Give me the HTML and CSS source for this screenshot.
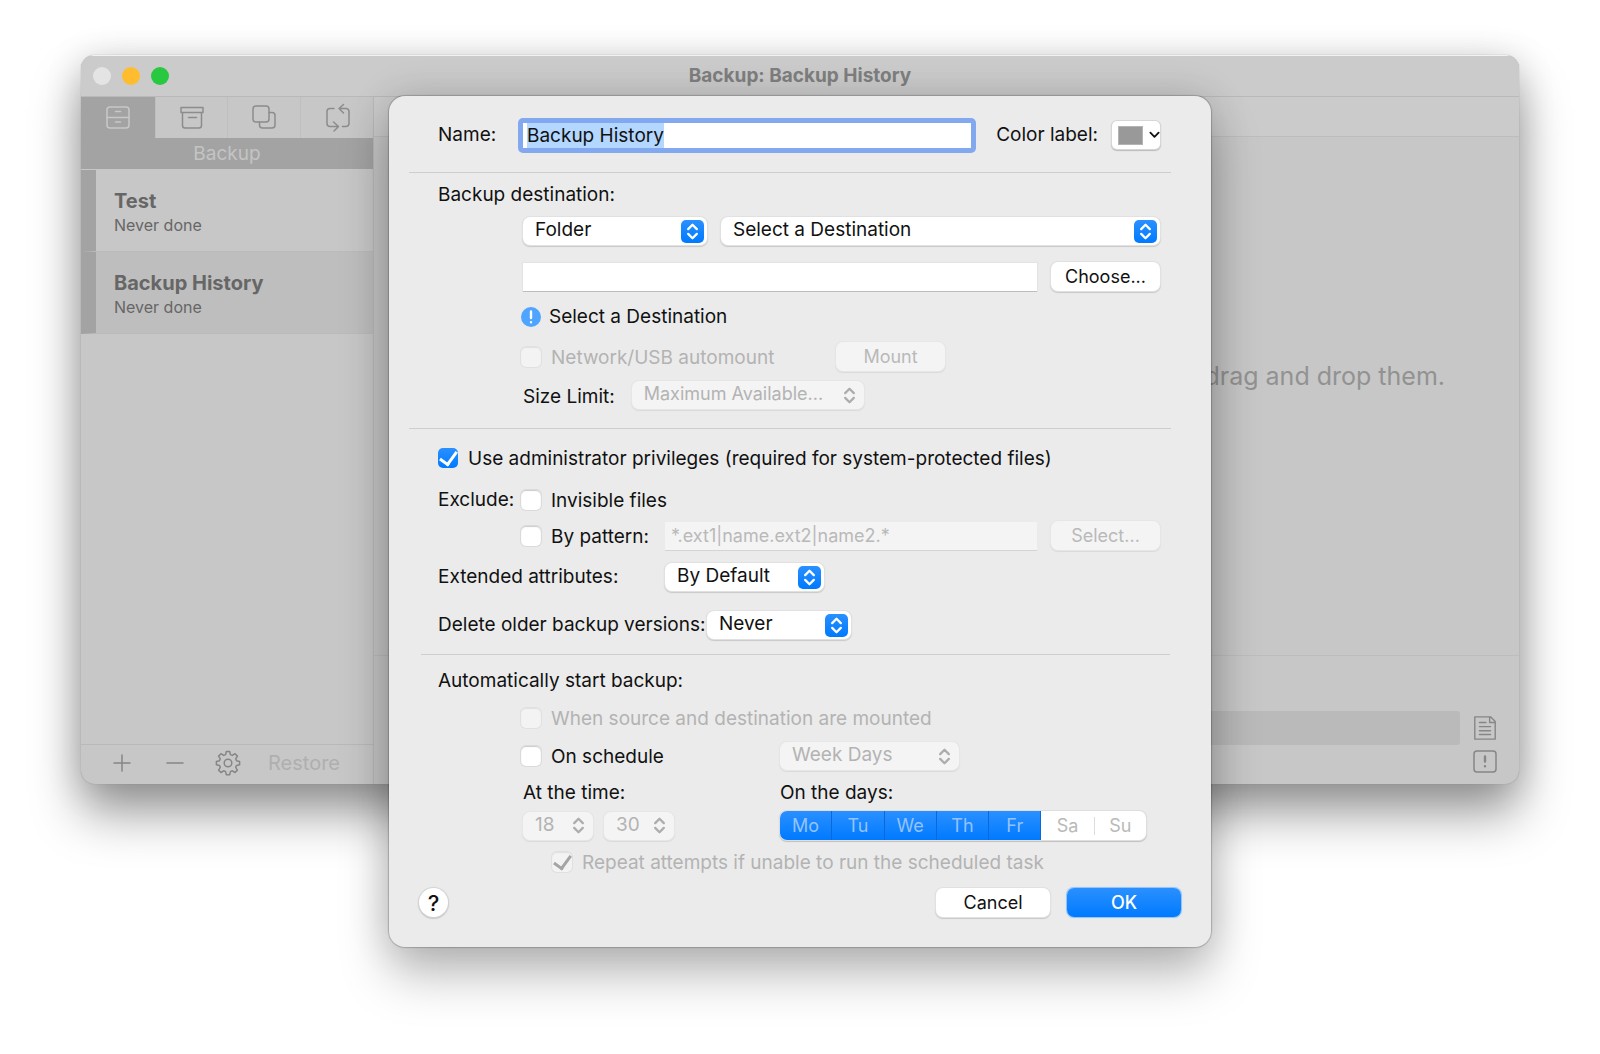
FILE: index.html
```html
<!DOCTYPE html>
<html lang="en">
<head>
<meta charset="utf-8">
<title>Backup: Backup History</title>
<link rel="stylesheet" href="styles.css">
</head>
<body>
<svg class="defs" aria-hidden="true">
  <symbol id="updown" viewBox="0 0 24 24"><path d="M7.5 9.5 12 5l4.500 4.500M7.500 14.500 12 19l4.500-4.500" fill="none" stroke="currentColor" stroke-width="2.400" stroke-linecap="round" stroke-linejoin="round"/></symbol>
</svg>
<main class="stage">
  <div class="window">
    <header class="titlebar">
      <div class="lights"><button class="light" aria-label="Close"></button><button class="light light-min" aria-label="Minimize"></button><button class="light light-max" aria-label="Zoom"></button></div>
      <h1 class="title">Backup: Backup History</h1>
    </header>
    <div class="panes">
      <aside class="sidebar">
        <nav class="tabs">
          <button class="tab tab-on" aria-label="Backup"><svg class="icon" viewBox="0 0 26 26"><rect x="2" y="2" width="22" height="21" rx="3"/><path d="M2 12.500h22M10.500 6.500h5M10.500 17h5"/></svg></button>
          <button class="tab" aria-label="Archive"><svg class="icon" viewBox="0 0 26 26"><path d="M2 2.500h22v5H2zM3.500 7.500v13a2.500 2.500 0 0 0 2.500 2.500h14a2.500 2.500 0 0 0 2.500-2.500v-13M9.500 12.500h8"/></svg></button>
          <button class="tab" aria-label="Clone"><svg class="icon" viewBox="0 0 26 26"><rect x="2" y="1" width="16" height="16" rx="3"/><path d="M18 7.500h3a3 3 0 0 1 3 3V20a3 3 0 0 1-3 3h-9.500a3 3 0 0 1-3-3v-3"/></svg></button>
          <button class="tab" aria-label="Synchronize"><svg class="icon" viewBox="0 0 26 26"><path d="M10 3.500H6a3 3 0 0 0-3 3v12a3 3 0 0 0 3 3h8M9.500 17l5 4.500-4.500 4.500M18.500 21.500H22a3 3 0 0 0 3-3v-12a3 3 0 0 0-3-3h-7M19.500-.5l-4.500 4 4.500 4.500"/></svg></button>
        </nav>
        <h2 class="band">Backup</h2>
        <ul class="tasks">
          <li class="task"><strong class="task-name">Test</strong><span class="task-state">Never done</span></li>
          <li class="task task-on"><strong class="task-name">Backup History</strong><span class="task-state">Never done</span></li>
        </ul>
        <footer class="sidebar-foot">
          <button class="tool" aria-label="Add"><svg class="icon" viewBox="0 0 26 26"><path d="M13 5v16M5 13h16"/></svg></button>
          <button class="tool" aria-label="Remove"><svg class="icon" viewBox="0 0 26 26"><path d="M5 13h16"/></svg></button>
          <button class="tool" aria-label="Settings"><svg class="icon" viewBox="0 0 26 26"><circle cx="13" cy="13" r="3.800"/><path d="M11.300 1.500h3.400l.7 3.100 1.900.8 2.700-1.700 2.400 2.400-1.700 2.700.8 1.900 3.100.7v3.400l-3.100.7-.8 1.900 1.700 2.700-2.400 2.400-2.700-1.700-1.900.8-.7 3.100h-3.400l-.7-3.100-1.900-.8L6 22.500l-2.400-2.400 1.700-2.700-.8-1.900-3.100-.7v-3.400l3.100-.7.8-1.900L3.600 6.100 6 3.700l2.700 1.700 1.900-.8z"/></svg></button>
          <button class="restore" disabled>Restore</button>
        </footer>
      </aside>
      <section class="content">
        <div class="content-bar"></div>
        <p class="drop">drag and drop them.</p>
        <div class="status">
          <div class="progress"></div>
          <div class="status-tools">
            <button class="tool" aria-label="Log"><svg class="icon" viewBox="0 0 26 28"><path d="M2 2h17l5 5v19H2zM18 2v6h6M7 8h7M7 12.500h12M7 17h12M7 21h12"/></svg></button>
            <button class="tool" aria-label="Alerts"><svg class="icon" viewBox="0 0 26 26"><rect x="2" y="2" width="22" height="21" rx="3"/><path stroke-width="2.400" d="M13 7.500v5M13 17.200v.1"/></svg></button>
          </div>
        </div>
      </section>
    </div>
  </div>

  <form class="dialog" role="dialog" aria-label="Backup settings">
    <div class="row name-row">
      <label class="name-label" for="name">Name:</label>
      <div class="field-focus"><input class="name-input" id="name" type="text" value="Backup History"></div>
      <label class="color-label" for="color">Color label:</label>
      <button class="color" id="color" type="button"><span class="swatch"></span><svg class="chevron" viewBox="0 0 12 8"><path d="M1.500 1.500 6 6l4.500-4.500"/></svg></button>
    </div>
    <hr class="rule">

    <section class="group group-dest">
      <h2 class="heading">Backup destination:</h2>
      <div class="row indent gap-m">
        <span class="popup popup-kind"><select aria-label="Kind"><option>Folder</option></select><svg class="knob"><use href="#updown"/></svg></span>
        <span class="popup grow"><select aria-label="Destination"><option>Select a Destination</option></select><svg class="knob"><use href="#updown"/></svg></span>
      </div>
      <div class="row indent gap-m path-row">
        <input class="text grow" type="text" aria-label="Path">
        <button class="btn" type="button">Choose...</button>
      </div>
      <div class="row checks note"><svg class="alert" viewBox="0 0 20 20"><circle cx="10" cy="10" r="10"/><path d="M10 4.500v6.500M10 15.200v.1"/></svg><span>Select a Destination</span></div>
      <div class="row checks mount-row">
        <label class="check check-off"><input type="checkbox" disabled><span>Network/USB automount</span></label>
        <button class="btn" type="button" disabled>Mount</button>
      </div>
      <div class="row indent gap-l limit-row">
        <label for="limit">Size Limit:</label>
        <span class="popup popup-limit popup-off"><select id="limit" disabled><option>Maximum Available...</option></select><svg class="knob"><use href="#updown"/></svg></span>
      </div>
    </section>
    <hr class="rule">

    <section class="group group-options">
      <label class="check"><input type="checkbox" checked><span>Use administrator privileges (required for system-protected files)</span></label>
      <div class="row exclude-row">
        <span class="exclude-label">Exclude:</span>
        <label class="check"><input type="checkbox"><span>Invisible files</span></label>
      </div>
      <div class="row checks pattern-row">
        <label class="check pattern-check"><input type="checkbox"><span>By pattern:</span></label>
        <input class="text grow" type="text" aria-label="Pattern" placeholder="*.ext1|name.ext2|name2.*" disabled>
        <button class="btn pattern-btn" type="button" disabled>Select...</button>
      </div>
      <div class="row attr-row">
        <label class="attr-label" for="attrs">Extended attributes:</label>
        <span class="popup popup-attrs"><select id="attrs"><option>By Default</option></select><svg class="knob"><use href="#updown"/></svg></span>
      </div>
      <div class="row delete-row">
        <label class="delete-label" for="older">Delete older backup versions:</label>
        <span class="popup popup-older"><select id="older"><option>Never</option></select><svg class="knob"><use href="#updown"/></svg></span>
      </div>
    </section>
    <hr class="rule rule-short">

    <section class="group group-auto">
      <h2 class="heading">Automatically start backup:</h2>
      <div class="row checks when-row"><label class="check check-off"><input type="checkbox" disabled><span>When source and destination are mounted</span></label></div>
      <div class="row checks schedule-row">
        <label class="check half-check"><input type="checkbox"><span>On schedule</span></label>
        <span class="popup popup-week popup-off"><select aria-label="Schedule" disabled><option>Week Days</option></select><svg class="knob"><use href="#updown"/></svg></span>
      </div>
      <div class="row indent caption-row"><span class="half">At the time:</span><span>On the days:</span></div>
      <div class="row indent time-row">
        <div class="half times">
          <span class="popup popup-num popup-off"><select aria-label="Hour" disabled><option>18</option></select><svg class="knob"><use href="#updown"/></svg></span>
          <span class="popup popup-num popup-off"><select aria-label="Minute" disabled><option>30</option></select><svg class="knob"><use href="#updown"/></svg></span>
        </div>
        <div class="days">
          <button class="day day-on" type="button" disabled>Mo</button><button class="day day-on" type="button" disabled>Tu</button><button class="day day-on" type="button" disabled>We</button><button class="day day-on" type="button" disabled>Th</button><button class="day day-on" type="button" disabled>Fr</button><button class="day" type="button" disabled>Sa</button><button class="day day-last" type="button" disabled>Su</button>
        </div>
      </div>
      <div class="row repeat-row"><label class="check check-off"><input type="checkbox" checked disabled><span>Repeat attempts if unable to run the scheduled task</span></label></div>
    </section>

    <footer class="row actions">
      <button class="help" type="button" aria-label="Help">?</button>
      <button class="btn btn-wide" type="button">Cancel</button>
      <button class="btn btn-wide btn-primary" type="submit">OK</button>
    </footer>
  </form>
</main>
</body>
</html>
```
FILE: styles.css
```css
* { box-sizing: border-box; }
body {
  margin: 0;
  background: #fff;
  color: #111;
  font: 19px/24px Inter, "Liberation Sans", sans-serif;
}
h1, h2, p, ul { margin: 0; padding: 0; font: inherit; list-style: none; }
button, input, select { font: inherit; color: inherit; margin: 0; padding: 0; border: 0; }
button { background: none; }
.defs { display: none; }

/* The sheet hangs over the window: both share one grid cell. */
.stage { display: grid; padding: 55px 81px 107px; }
.window, .dialog { grid-area: 1 / 1; align-self: start; }

.window {
  display: flex;
  flex-direction: column;
  min-height: 729px;
  border-radius: 14px;
  overflow: hidden;
  background: #c7c7c7;
  box-shadow: 0 0 1px #888, 0 30px 50px rgba(0, 0, 0, .38), 0 4px 36px rgba(0, 0, 0, .16);
}
.titlebar {
  display: grid;
  grid-template-columns: 1fr auto 1fr;
  align-items: center;
  height: 42px;
  padding: 0 12px;
  background: #cbcbcb;
  border-top: 1px solid #f2f2f2;
  border-bottom: 1px solid #b9b9b9;
}
.lights { display: flex; gap: 11px; }
.light { width: 18px; height: 18px; border-radius: 50%; background: #e4e4e4; }
.light-min { background: #febc2e; }
.light-max { background: #28c840; }
.title { font-weight: 700; color: #7f7f7f; }
.panes { display: flex; flex: 1; }
.sidebar { display: flex; flex-direction: column; width: 293px; border-right: 1px solid #b9b9b9; }
.tabs { display: grid; grid-template-columns: 75px repeat(3, 1fr); height: 41px; }
.tab { display: grid; place-items: center; border-right: 1px solid #bfbfbf; color: #8c8c8c; }
.tab:last-child { border: 0; }
.tab-on { background: #a3a3a3; color: #c8c8c8; }
.icon { display: block; width: 26px; height: 26px; overflow: visible; fill: none; stroke: currentColor; stroke-width: 1.5; stroke-linecap: round; stroke-linejoin: round; }
.band { height: 31px; line-height: 31px; text-align: center; color: #c4c4c4; background: #a3a3a3; }
.tasks { flex: 1; padding-top: 1px; }
.task {
  display: flex;
  flex-direction: column;
  height: 82px;
  padding: 19px 0 0 18px;
  border-left: 15px solid #a3a3a3;
  border-bottom: 1px solid #bbb;
  color: #666;
}
.task-on { background: #bebebe; }
.task-name { font-size: 20px; }
.task-state { font-size: 16px; }
.sidebar-foot { display: flex; align-items: center; height: 40px; padding: 0 0 4px 28px; gap: 27px; border-top: 1px solid #b9b9b9; }
.tool { color: #868686; }
.restore { font-size: 20px; color: #afafaf; }
.content { display: flex; flex: 1; flex-direction: column; }
.content-bar { height: 40px; background: #cbcbcb; border-bottom: 1px solid #bdbdbd; }
.drop { display: flex; flex: 1; align-items: center; justify-content: flex-end; padding: 0 74px 40px 0; font-size: 25px; color: #929292; }
.status { display: flex; gap: 12px; height: 129px; padding: 55px 21px 0 24px; border-top: 1px solid #bdbdbd; }
.progress { flex: 1; height: 34px; border-radius: 3px; background: #bababa; }
.status-tools { display: flex; flex-direction: column; gap: 8px; padding-top: 4px; }

.dialog {
  display: flex;
  flex-direction: column;
  justify-self: center;
  width: 822px;
  max-width: 100%;
  margin-top: 41px;
  padding: 0 20px 30px;
  border-radius: 16px;
  background: #ebebeb;
  box-shadow: 0 0 1px 1px rgba(0, 0, 0, .2), 0 28px 50px rgba(0, 0, 0, .26), 0 0 40px rgba(0, 0, 0, .14);
}
.row { display: flex; align-items: center; }
.grow { flex: 1; min-width: 0; }
.rule { width: 762px; max-width: 100%; height: 1px; margin: 0; border: 0; background: #cecece; }
.rule-short { width: 749px; margin-left: 12px; }
.name-row { height: 76px; padding: 2px 31px 0 29px; }
.name-label { width: 80px; }
.field-focus { flex: 1; border-radius: 5px; background: #82a8f0; padding: 5px; }
.name-input { display: block; width: 100%; height: 25px; padding: 0 4px; background: linear-gradient(#b3d7ff, #b3d7ff) 4px 0 / 137px 25px no-repeat #fff; outline: none; }
.color-label { margin: 0 14px 0 20px; }
.color { display: flex; align-items: center; gap: 6px; width: 48px; height: 28px; padding-left: 6px; border-radius: 5px; background: #fff; box-shadow: 0 0 0 1px #d6d6d6, 0 1px 1px 1px #bbb; }
.swatch { width: 25px; height: 19px; background: #999; border: 1px solid #b4b4b4; }
.chevron { width: 11px; height: 8px; fill: none; stroke: #111; stroke-width: 2; stroke-linecap: round; stroke-linejoin: round; }

.group { display: flex; flex-direction: column; padding: 0 31px 0 29px; }
.group-dest { padding-top: 10px; padding-bottom: 19px; }
.group-options { padding-top: 18px; padding-bottom: 15px; }
.group-auto { padding-top: 14px; }
.heading { margin-bottom: 10px; }
.indent { padding-left: 85px; }
.checks { padding-left: 83px; }
.gap-m { gap: 14px; }
.gap-l { gap: 17px; }
.path-row { margin-top: 17px; }
.note { gap: 8px; height: 22px; margin-top: 15px; }
.alert { width: 20px; height: 20px; fill: #4ea4ff; }
.alert path { stroke: #fff; stroke-width: 2.4; stroke-linecap: round; }
.mount-row { justify-content: space-between; margin-top: 14px; padding-right: 215px; }
.limit-row { align-items: flex-end; margin-top: 10px; }
.exclude-row { margin-top: 19px; }
.exclude-label { width: 83px; }
.pattern-row { margin-top: 9px; }
.pattern-check { width: 144px; }
.pattern-btn { margin-left: 14px; }
.attr-row { margin-top: 13px; }
.attr-label { width: 227px; }
.delete-row { margin-top: 20px; }
.delete-label { width: 269px; white-space: nowrap; }
.when-row { margin-top: 4px; }
.schedule-row { margin-top: 13px; }
.half-check { width: 259px; }
.half { width: 257px; }
.caption-row { margin-top: 11px; }
.time-row { margin-top: 6px; }
.times { display: flex; gap: 11px; }
.repeat-row { margin-top: 11px; padding-left: 114px; }

.check { display: flex; align-items: center; gap: 10px; height: 22px; white-space: nowrap; }
.check span { padding-top: 2px; }
.check input {
  appearance: none;
  flex: none;
  width: 20px;
  height: 20px;
  border-radius: 5px;
  background: #fff;
  box-shadow: 0 0 0 1px #dadada, inset 0 1px 1px #ccc;
}
.check input:checked { display: grid; place-items: center; background: linear-gradient(#2a90ff, #007aff); box-shadow: none; color: #fff; }
.check input:checked::before { content: ""; width: 8px; height: 14px; margin-bottom: 4px; border: solid currentColor; border-width: 0 3px 3px 0; transform: rotate(36deg); }
.check input:disabled { background: #f3f3f3; box-shadow: 0 0 0 1px #e0e0e0, inset 0 1px 1px #e0e0e0; color: #a5a5a5; }
.check-off { color: #b3b3b3; }

.popup { display: grid; height: 28px; border-radius: 7px; background: #fff; box-shadow: 0 0 0 1px #e1e1e1, 0 1px 1px 1px #c8c8c8; }
.popup select { grid-area: 1 / 1; appearance: none; width: 100%; height: 26px; padding-left: 12px; border-radius: 7px; background: none; opacity: 1; }
.knob { grid-area: 1 / 1; place-self: center end; width: 23px; height: 23px; margin-right: 3px; border-radius: 5px; background: linear-gradient(#2a90ff, #007aff); color: #fff; pointer-events: none; }
.popup-off { background: #f4f4f4; color: #b3b3b3; box-shadow: 0 0 0 1px #e6e6e6, 0 1px 1px 1px #dadada; }
.popup-off .knob { background: none; color: #adadad; }
.popup-kind { width: 184px; }
.popup-limit { width: 232px; font-size: 18px; }
.popup-attrs { width: 159px; }
.popup-older { width: 144px; }
.popup-week { width: 179px; }
.popup-num { width: 70px; }

.text { height: 28px; padding: 0 6px; background: #fff; box-shadow: 0 1px 0 #bcbcbc, 0 0 0 1px #e3e3e3; }
.text:disabled { background: #f4f4f4; font-size: 18px; box-shadow: 0 1px 0 #d4d4d4; }
.text::placeholder { color: #b9b9b9; }

.btn { width: 109px; height: 29px; border-radius: 7px; background: #fff; font-size: 18px; box-shadow: 0 0 0 1px #e1e1e1, 0 1px 1px 1px #c8c8c8; }
.btn:disabled { background: #f4f4f4; color: #b9b9b9; box-shadow: 0 0 0 1px #e6e6e6, 0 1px 1px 1px #dadada; }
.btn-wide { width: 114px; }
.btn-primary { background: linear-gradient(#2a90ff, #007aff); color: #fff; box-shadow: 0 0 1px 1px #8fc0f8; font-weight: 500; }

.days { display: grid; grid-template-columns: repeat(7, 1fr); width: 366px; height: 29px; border-radius: 7px; overflow: hidden; background: #fff; box-shadow: 0 0 0 1px #dedede, 0 1px 1px 1px #c0c0c0; }
.day { color: #b9b9b9; font-size: 18px; }
.day-on { background: linear-gradient(#2a90ff, #007aff); color: #94c3fc; border-right: 1px solid #0a68d8; }
.day-last { height: 18px; align-self: center; line-height: 18px; border-left: 1px solid #ddd; }

.actions { gap: 17px; margin-top: 15px; padding: 0 10px; }
.help { width: 29px; height: 29px; margin-right: auto; border-radius: 50%; background: #fff; font-size: 22px; font-weight: 500; box-shadow: 0 0 1px 1px #d4d4d4, 0 1px 1px 1px #c8c8c8; }
```
